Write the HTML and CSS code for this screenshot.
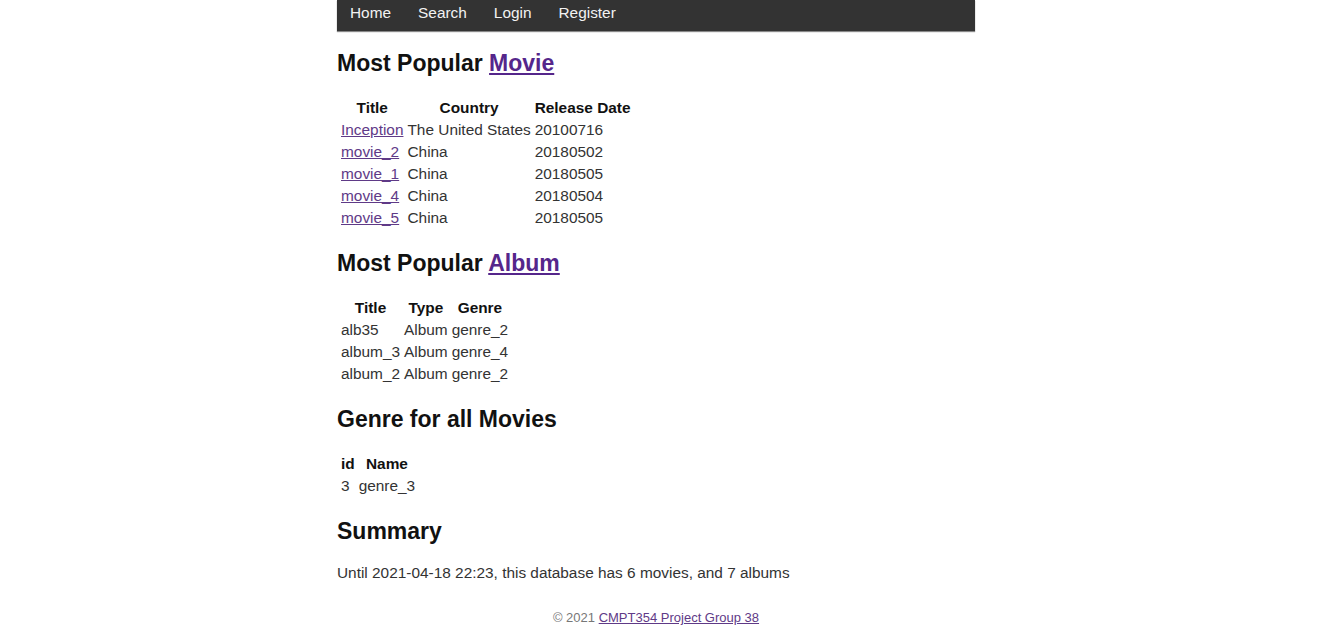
FILE: index.html
```html
<!DOCTYPE html>
<html>
<head>
<meta charset="utf-8">
<title>CMPT354</title>
<link rel="stylesheet" href="styles.css">
</head>
<body>
<div class="page">
  <nav class="topnav">
    <a href="#">Home</a>
    <a href="#">Search</a>
    <a href="#">Login</a>
    <a href="#">Register</a>
  </nav>
  <main class="content">
    <h2 class="first">Most Popular <a href="#">Movie</a></h2>
    <table class="data">
      <tr><th>Title</th><th>Country</th><th>Release Date</th></tr>
      <tr><td><a href="#">Inception</a></td><td>The United States</td><td>20100716</td></tr>
      <tr><td><a href="#">movie_2</a></td><td>China</td><td>20180502</td></tr>
      <tr><td><a href="#">movie_1</a></td><td>China</td><td>20180505</td></tr>
      <tr><td><a href="#">movie_4</a></td><td>China</td><td>20180504</td></tr>
      <tr><td><a href="#">movie_5</a></td><td>China</td><td>20180505</td></tr>
    </table>
    <h2>Most Popular <a href="#">Album</a></h2>
    <table class="data">
      <tr><th>Title</th><th>Type</th><th>Genre</th></tr>
      <tr><td>alb35</td><td>Album</td><td>genre_2</td></tr>
      <tr><td>album_3</td><td>Album</td><td>genre_4</td></tr>
      <tr><td>album_2</td><td>Album</td><td>genre_2</td></tr>
    </table>
    <h2>Genre for all Movies</h2>
    <table class="data">
      <tr><th>id</th><th>Name</th></tr>
      <tr><td>3</td><td>genre_3</td></tr>
    </table>
    <h2>Summary</h2>
    <p class="summary">Until 2021-04-18 22:23, this database has 6 movies, and 7 albums</p>
  </main>
  <footer class="footer">© 2021 <a href="#">CMPT354 Project Group 38</a></footer>
</div>
</body>
</html>
```
FILE: styles.css
```css
html, body {
  margin: 0;
  padding: 0;
  background: #fff;
}
body {
  font-family: "Liberation Sans", Arial, sans-serif;
  font-size: 15.4px;
  color: #222;
}
.page {
  width: 638px;
  margin-left: 337px;
}
.topnav {
  display: flex;
  background: #333;
  height: 31px;
  line-height: 26px;
  box-shadow: 0 1px 1px #888;
}
.topnav a {
  color: #f2f2f2;
  text-decoration: none;
  padding: 0 13px;
  margin-right: 1px;
  font-size: 15.4px;
}
.content h2 {
  font-size: 23px;
  font-weight: bold;
  color: #111;
  margin: 20px 0 19px;
}
.content h2.first {
  margin-top: 19px;
}
.content h2 a {
  color: #55268b;
}
.data {
  border-collapse: separate;
  border-spacing: 2px;
  margin-left: 1px;
  font-size: 15.4px;
}
.data th, .data td {
  padding: 1px;
  height: 18px;
}
.data th {
  font-weight: bold;
  color: #111;
}
.data td {
  text-align: left;
  color: #333;
}
.data a {
  color: #5f3a87;
}
.summary {
  margin: 19px 0 0;
  color: #333;
}
.footer {
  text-align: center;
  font-size: 13px;
  color: #777;
  margin-top: 28px;
}
.footer a {
  color: #5f3a87;
}
```
